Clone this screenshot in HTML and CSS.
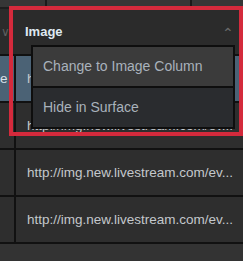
FILE: index.html
```html
<html lang="en">
<head>
     <meta charset="UTF-8">
     <title>Grid</title>
     <link rel="stylesheet" href="styles.css">
</head>
<body>
     <div id="wrapper">
          <div class="strip">
               <div class="strip-cell s1"></div>
               <div class="strip-cell s2"></div>
               <div class="strip-cell s3"></div>
          </div>
          <div class="row head">
               <div class="c0"><span class="chev">&#8744;</span></div>
               <div class="c1"><b class="title">Image</b><span class="sort">&#8963;</span></div>
          </div>
          <div class="row selected">
               <div class="c0">e</div>
               <div class="c1">http://img.new.livestream.com/ev...</div>
          </div>
          <div class="row">
               <div class="c0"></div>
               <div class="c1">http://img.new.livestream.com/ev...</div>
          </div>
          <div class="row">
               <div class="c0"></div>
               <div class="c1">http://img.new.livestream.com/ev...</div>
          </div>
          <div class="row">
               <div class="c0"></div>
               <div class="c1">http://img.new.livestream.com/ev...</div>
          </div>

          <!-- context menu over the column header -->
          <div id="menu">
               <div class="item first">Change to Image Column</div>
               <div class="item">Hide in Surface</div>
          </div>
          <!-- red highlight frame -->
          <div id="mark"></div>
     </div>
</body>
</html>
```

FILE: styles.css
```css
body{
     margin: 0px;
     background: #333333;
     font-family: "Liberation Sans", Arial, sans-serif;
}
#wrapper{
     position: relative;
     width: 243px;
     height: 261px;
     overflow: hidden;
}
.strip{
     display: flex;
     height: 7px;
     background: #363636;
     border-bottom: 2px solid #1e1e1e;
}
.strip-cell{
     border-right: 2px solid #1a1a1a;
}
.s1{
     width: 45px;
}
.s2{
     width: 143px;
}
.s3{
     flex: 1;
     border-right: none;
}
.row{
     display: flex;
     height: 45px;
     border-bottom: 2px solid #111111;
     background: #2e2e2e;
     color: #c4c8cc;
     font-size: 13.5px;
}
.c0{
     width: 14px;
     border-right: 2px solid #111111;
     display: flex;
     align-items: center;
     overflow: hidden;
}
.c1{
     flex: 1;
     display: flex;
     align-items: center;
     padding-left: 11px;
     white-space: nowrap;
     overflow: hidden;
}
.head{
     background: #2b2b2b;
}
.head .c0{
     border-right: none;
}
.chev{
     color: #5e5e5e;
     font-size: 12px;
     padding-left: 1px;
}
.title{
     color: #dfe8f1;
     font-size: 13px;
     flex: 1;
}
.sort{
     color: #6a6a6a;
     font-size: 14px;
     padding-right: 9px;
     padding-top: 2px;
}
.selected{
     background: #4b6275;
}
.selected .c0{
     color: #d8e0e8;
}
#menu{
     position: absolute;
     left: 31px;
     top: 45px;
     width: 200px;
     border: 2px solid #0e0e0e;
     background: #0e0e0e;
}
#menu .item{
     height: 39px;
     line-height: 39px;
     padding-left: 10px;
     font-size: 14px;
     color: #a9b2bb;
     background: #2a2c2f;
}
#menu .item.first{
     background: #3b3b3b;
     margin-bottom: 2px;
}
#mark{
     position: absolute;
     left: 9px;
     top: 6px;
     right: 0px;
     height: 122px;
     border: 4px solid #d42a3c;
}
```
